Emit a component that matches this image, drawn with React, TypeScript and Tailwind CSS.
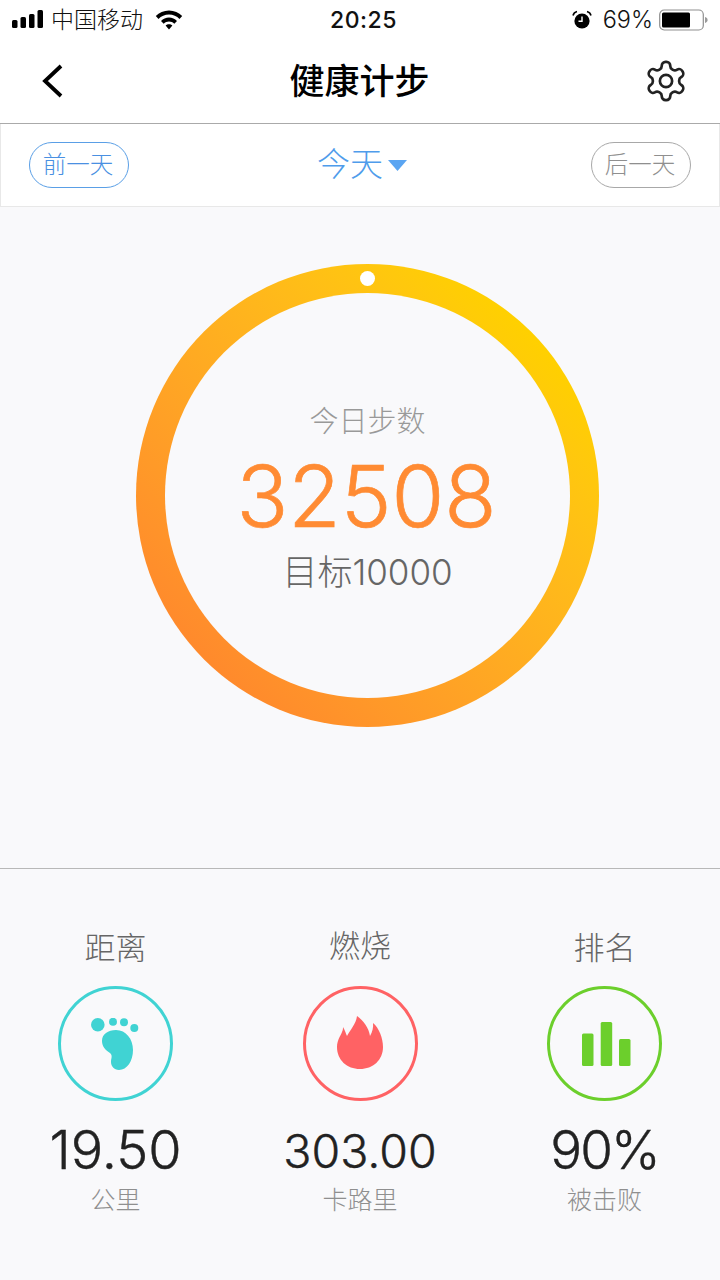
import React from "react";

const FONT = "font-['Inter','Noto_Sans_CJK_SC',sans-serif]";

function Signal() {
  return (
    <svg width="33" height="20" viewBox="0 0 33 20" fill="#000">
      <rect x="0" y="10" width="5.500" height="8" rx="1.500" />
      <rect x="8.500" y="7" width="5.500" height="11" rx="1.500" />
      <rect x="17" y="4" width="5.500" height="14" rx="1.500" />
      <rect x="25.500" y="0" width="5.500" height="18" rx="1.500" />
    </svg>
  );
}

function Wifi() {
  return (
    <svg width="28" height="20" viewBox="0 0 28 20" fill="#000">
      <path d="M14 0.5C8.8 0.5 4.1 2.6.8 6l2.7 2.9C6.2 6.1 9.9 4.4 14 4.4s7.8 1.7 10.5 4.5L27.2 6C23.9 2.6 19.2.5 14 .5Z" />
      <path d="M14 7.6c-3.1 0-5.9 1.3-8 3.3l2.7 2.9c1.4-1.3 3.3-2.2 5.3-2.2s3.900.9 5.300 2.200l2.700-2.900c-2.100-2-4.900-3.300-8-3.300Z" />
      <path d="M14 14.300c-1.300 0-2.500.5-3.400 1.300L14 19.400l3.400-3.800c-.9-.8-2.100-1.300-3.400-1.300Z" />
    </svg>
  );
}

function Alarm() {
  return (
    <svg width="20" height="20" viewBox="0 0 20 20">
      <circle cx="10" cy="11" r="7.600" fill="#000" />
      <path d="M10 6.500V11.300H6.500" stroke="#fff" strokeWidth="1.400" fill="none" />
      <path d="M1 5.500C1.500 3.500 3 2 5 1.500M19 5.500C18.500 3.500 17 2 15 1.500" stroke="#000" strokeWidth="1.600" fill="none" />
    </svg>
  );
}

function Battery() {
  return (
    <svg width="50" height="22" viewBox="0 0 50 22">
      <rect x="0.700" y="1" width="43.600" height="20" rx="4.500" fill="none" stroke="#8f8f8f" strokeWidth="1.200" />
      <rect x="3" y="3.500" width="28" height="15" rx="1.500" fill="#000" />
      <path d="M46 8c1.600.4 2.600 1.600 2.600 3s-1 2.600-2.600 3Z" fill="#9a9a9a" />
    </svg>
  );
}

function Gear() {
  return (
    <svg width="46" height="46" viewBox="0 0 24 24" fill="none" stroke="#222" strokeWidth="1.400" strokeLinecap="round" strokeLinejoin="round">
      <path d="M12.220 2h-.44a2 2 0 0 0-2 2v.18a2 2 0 0 1-1 1.730l-.43.250a2 2 0 0 1-2 0l-.15-.080a2 2 0 0 0-2.730.730l-.22.380a2 2 0 0 0 .730 2.730l.15.100a2 2 0 0 1 1 1.720v.510a2 2 0 0 1-1 1.740l-.15.090a2 2 0 0 0-.730 2.730l.22.380a2 2 0 0 0 2.730.730l.15-.080a2 2 0 0 1 2 0l.43.250a2 2 0 0 1 1 1.730V20a2 2 0 0 0 2 2h.44a2 2 0 0 0 2-2v-.18a2 2 0 0 1 1-1.730l.43-.250a2 2 0 0 1 2 0l.15.080a2 2 0 0 0 2.730-.730l.22-.390a2 2 0 0 0-.730-2.730l-.15-.080a2 2 0 0 1-1-1.740v-.500a2 2 0 0 1 1-1.740l.15-.090a2 2 0 0 0 .730-2.730l-.22-.380a2 2 0 0 0-2.730-.730l-.15.080a2 2 0 0 1-2 0l-.43-.250a2 2 0 0 1-1-1.730V4a2 2 0 0 0-2-2Z" />
      <circle cx="12" cy="12" r="3.200" />
    </svg>
  );
}

function Foot() {
  return (
    <svg className="-ml-[2px]" width="48" height="52" viewBox="0 0 48 52" fill="#40d3d3">
      <circle cx="6.800" cy="6.800" r="6.800" />
      <circle cx="22" cy="3.800" r="4" />
      <circle cx="33" cy="4.300" r="4" />
      <circle cx="43.300" cy="10" r="4" />
      <path d="M25 12C35 12 42 21 42 32C42 43 36 52 28 52C23 52 20 48 20 44C20 40 22 38 19 35C14 32 11 28 11 23C11 16 17 12 25 12Z" />
    </svg>
  );
}

function Flame() {
  return (
    <svg className="-mt-[2px]" width="46" height="53" viewBox="0 0 46 53" fill="#ff6264">
      <path d="M20 0C26 4 32 12 33 20C35.500 16 36.500 11 36 7C42 12 46 22 46 31C46 44 36 53 23 53C10 53 0 44 0 31C0 24 4 19 5 16C6 14 6 12 6 11C8 14 9 18 10 20C13 14 19 8 20 0Z" />
    </svg>
  );
}

function Bars() {
  return (
    <svg className="ml-[4px]" width="49" height="44" viewBox="0 0 49 44" fill="#6ccf2c">
      <rect x="0" y="11.500" width="11.500" height="32.500" rx="1.500" />
      <rect x="18.700" y="0" width="11.500" height="44" rx="1.500" />
      <rect x="37" y="17" width="11.500" height="27" rx="1.500" />
    </svg>
  );
}

function Stat({
  title,
  value,
  unit,
  ring,
  icon,
  titleClass,
  valueClass,
}: {
  title: string;
  value: string;
  unit: string;
  ring: string;
  icon: React.ReactNode;
  titleClass: string;
  valueClass: string;
}) {
  return (
    <div className="flex w-[115px] flex-col items-center">
      <div className={`h-[42px] whitespace-nowrap text-[31px] leading-[42px] font-light text-[#666] ${titleClass}`}>{title}</div>
      <div className={`mt-[17px] flex h-[115px] w-[115px] items-center justify-center rounded-full border-[3px] ${ring}`}>
        {icon}
      </div>
      <div className={`whitespace-nowrap font-light leading-[56px] text-[#222] [-webkit-text-stroke:0.4px_#222] ${valueClass}`}>{value}</div>
      <div className="mt-[4px] whitespace-nowrap text-[25px] font-light leading-[36px] text-[#8f8f8f]">{unit}</div>
    </div>
  );
}

export default function App() {
  return (
    <div className={`flex h-[1280px] w-[720px] flex-col overflow-hidden bg-[#f9f9fb] ${FONT}`}>
      <div className="flex h-[40px] items-center bg-white pl-[12px] pr-[11px] text-[#111]">
        <div className="flex w-[300px] items-center">
          <Signal />
          <span className="ml-[6px] text-[23px] leading-[40px] font-light">中国移动</span>
          <span className="ml-[12px]"><Wifi /></span>
        </div>
        <div className="flex-1 translate-x-[3px] text-center text-[23px] font-medium tracking-[0.5px]">20:25</div>
        <div className="flex w-[300px] items-center justify-end">
          <Alarm />
          <span className="ml-[11px] text-[23.500px] font-light">69%</span>
          <span className="ml-[6px]"><Battery /></span>
        </div>
      </div>

      <div className="flex h-[84px] items-center justify-between border-b border-[#aaaaaa] bg-white pb-[2px] pl-[40px] pr-[31px]">
        <svg width="24" height="34" viewBox="0 0 24 34" fill="none" stroke="#000" strokeWidth="3.800">
          <path d="M21 2 5 17l16 15" />
        </svg>
        <div className="translate-x-[6px] text-[35px] font-medium leading-[46px] text-black">健康计步</div>
        <Gear />
      </div>

      <div className="flex h-[83px] items-center justify-between border-x border-b border-[#e8e8e8] bg-white pl-[28px] pr-[28px]">
        <div className="flex h-[46px] w-[100px] items-center justify-center rounded-full border border-[#5a9fe6] pr-[2px] text-[23.500px] font-light text-[#4a90e2]">
          前一天
        </div>
        <div className="flex items-center pl-[4px] text-[33px] font-light text-[#4f9ceb]">
          今天
          <svg className="ml-[5px]" width="19" height="11" viewBox="0 0 19 11" fill="#5aa5f2">
            <path d="M0 0h19L9.500 11Z" />
          </svg>
        </div>
        <div className="flex h-[46px] w-[100px] items-center justify-center rounded-full border border-[#a8a8a8] pr-[2px] text-[23.500px] font-light text-[#8f8f8f]">
          后一天
        </div>
      </div>

      <div className="flex h-[662px] flex-col border-b border-[#b8b8b8]">
        <div className="relative ml-[136px] mt-[57px] flex h-[463px] w-[463px] items-center justify-center rounded-full bg-linear-to-tr from-[#ff8a2c] from-15% to-[#ffd000] to-85%">
          <span className="absolute left-[224px] top-[7px] h-[15px] w-[15px] rounded-full bg-white" />
          <div className="flex h-[405px] w-[405px] flex-col items-center rounded-full bg-[#f9f9fb] pt-[108px]">
            <div className="text-[29px] font-light leading-[42px] text-[#999]">今日步数</div>
            <div className="mt-[6px] -translate-x-[1px] text-[85.500px] font-light leading-[94px] text-[#ff8b33] [-webkit-text-stroke:0.7px_#ff8b33]">32508</div>
            <div className="mt-[6px] text-[35px] font-light leading-[46px] text-[#666]">目标10000</div>
          </div>
        </div>
      </div>

      <div className="flex justify-between pl-[58px] pr-[58px] pt-[58px]">
        <Stat
          title="距离"
          value="19.50"
          unit="公里"
          ring="border-[#40d3d3]"
          titleClass="mt-[0px]"
          valueClass="mt-[21px] text-[54px]"
          icon={<Foot />}
        />
        <Stat
          title="燃烧"
          value="303.00"
          unit="卡路里"
          ring="border-[#ff6264]"
          titleClass="-mt-[2px] mb-[2px]"
          valueClass="mt-[22px] mb-[-1px] text-[46.500px]"
          icon={<Flame />}
        />
        <Stat
          title="排名"
          value="90%"
          unit="被击败"
          ring="border-[#6ccf2c]"
          titleClass="mt-[0px]"
          valueClass="mt-[21px] text-[53px] tracking-[-2px]"
          icon={<Bars />}
        />
      </div>
    </div>
  );
}
